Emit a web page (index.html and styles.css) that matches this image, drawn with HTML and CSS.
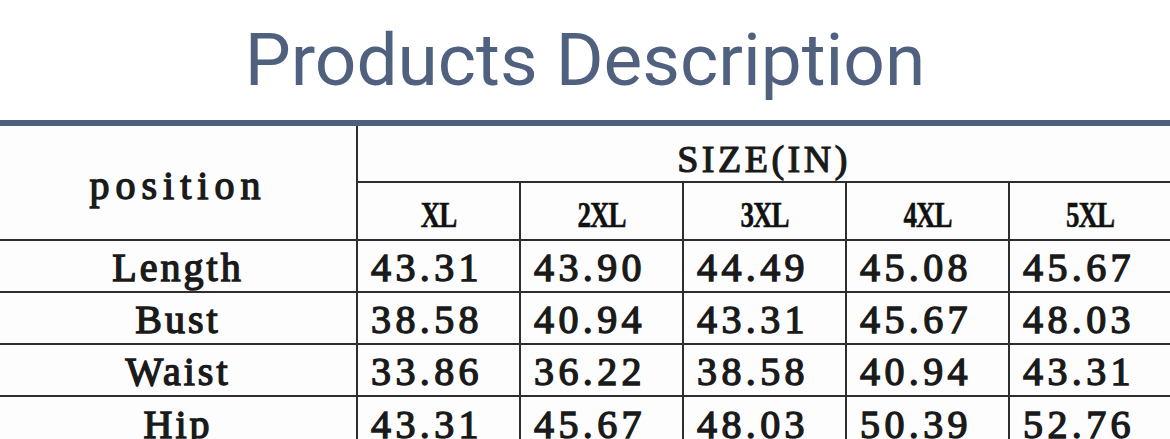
FILE: index.html
```html
<!DOCTYPE html>
<html lang="en">
<head>
<meta charset="utf-8">
<title>Products Description</title>
<link rel="stylesheet" href="styles.css">
</head>
<body>
<header class="head">
  <h1 class="title">Products Description</h1>
</header>
<div class="rule"></div>
<div class="chart">
  <div class="cell pos"><span class="label wide">position</span></div>
  <div class="cell size-head"><span class="label">SIZE(IN)</span></div>
  <div class="cell sz"><span class="size">XL</span></div>
  <div class="cell sz"><span class="size">2XL</span></div>
  <div class="cell sz"><span class="size">3XL</span></div>
  <div class="cell sz"><span class="size">4XL</span></div>
  <div class="cell sz"><span class="size">5XL</span></div>

  <div class="cell row"><span class="label">Length</span></div>
  <div class="cell val"><span class="num">43.31</span></div>
  <div class="cell val"><span class="num">43.90</span></div>
  <div class="cell val"><span class="num">44.49</span></div>
  <div class="cell val"><span class="num">45.08</span></div>
  <div class="cell val"><span class="num">45.67</span></div>

  <div class="cell row"><span class="label">Bust</span></div>
  <div class="cell val"><span class="num">38.58</span></div>
  <div class="cell val"><span class="num">40.94</span></div>
  <div class="cell val"><span class="num">43.31</span></div>
  <div class="cell val"><span class="num">45.67</span></div>
  <div class="cell val"><span class="num">48.03</span></div>

  <div class="cell row"><span class="label">Waist</span></div>
  <div class="cell val"><span class="num">33.86</span></div>
  <div class="cell val"><span class="num">36.22</span></div>
  <div class="cell val"><span class="num">38.58</span></div>
  <div class="cell val"><span class="num">40.94</span></div>
  <div class="cell val"><span class="num">43.31</span></div>

  <div class="cell row"><span class="label">Hip</span></div>
  <div class="cell val"><span class="num">43.31</span></div>
  <div class="cell val"><span class="num">45.67</span></div>
  <div class="cell val"><span class="num">48.03</span></div>
  <div class="cell val"><span class="num">50.39</span></div>
  <div class="cell val"><span class="num">52.76</span></div>
</div>
</body>
</html>
```
FILE: styles.css
```css
html, body {
  margin: 0;
  padding: 0;
  background: #ffffff;
  overflow: hidden;
}

.head {
  height: 120px;
  box-sizing: border-box;
  padding-top: 24px;
}

.title {
  margin: 0;
  font-family: Roboto, "Liberation Sans", sans-serif;
  font-weight: 400;
  font-size: 73px;
  line-height: 73px;
  color: #50617f;
  text-align: center;
}

.rule {
  height: 6px;
  background: #4f5f7b;
}

.chart {
  display: grid;
  grid-template-columns: 356px 161px 161px 161px 161px 1fr;
  grid-template-rows: 55px 56px 50px 50px 50px 52px;
  gap: 2px;
  background: #2e2e2e;
  width: 1170px;
}

.cell {
  background: #fdfdfd;
  display: flex;
  align-items: center;
  justify-content: center;
  color: #1a1a1a;
  box-sizing: border-box;
  padding-top: 4px;
}

.val {
  justify-content: flex-start;
  padding-left: 13px;
}

.pos {
  grid-row: 1 / 3;
  padding-top: 6px;
}

.size-head {
  grid-column: 2 / 7;
  padding-top: 10px;
}

.sz {
  padding-top: 8px;
}

.label,
.num {
  font-family: "Liberation Serif", "Times New Roman", serif;
  font-weight: 400;
  font-size: 40px;
  line-height: 40px;
  letter-spacing: 3px;
  -webkit-text-stroke: 1.4px #1a1a1a;
}

.num {
  letter-spacing: 4.4px;
}

.wide {
  letter-spacing: 6px;
}

.size-head .label {
  font-size: 38px;
  letter-spacing: 3.5px;
  -webkit-text-stroke: 1.2px #1a1a1a;
}

.size {
  font-family: "Liberation Serif", "Times New Roman", serif;
  font-weight: 700;
  font-size: 27px;
  line-height: 27px;
  letter-spacing: -1px;
  display: inline-block;
  transform: scaleY(1.3);
  color: #111;
  -webkit-text-stroke: 0.4px #111;
}
```
